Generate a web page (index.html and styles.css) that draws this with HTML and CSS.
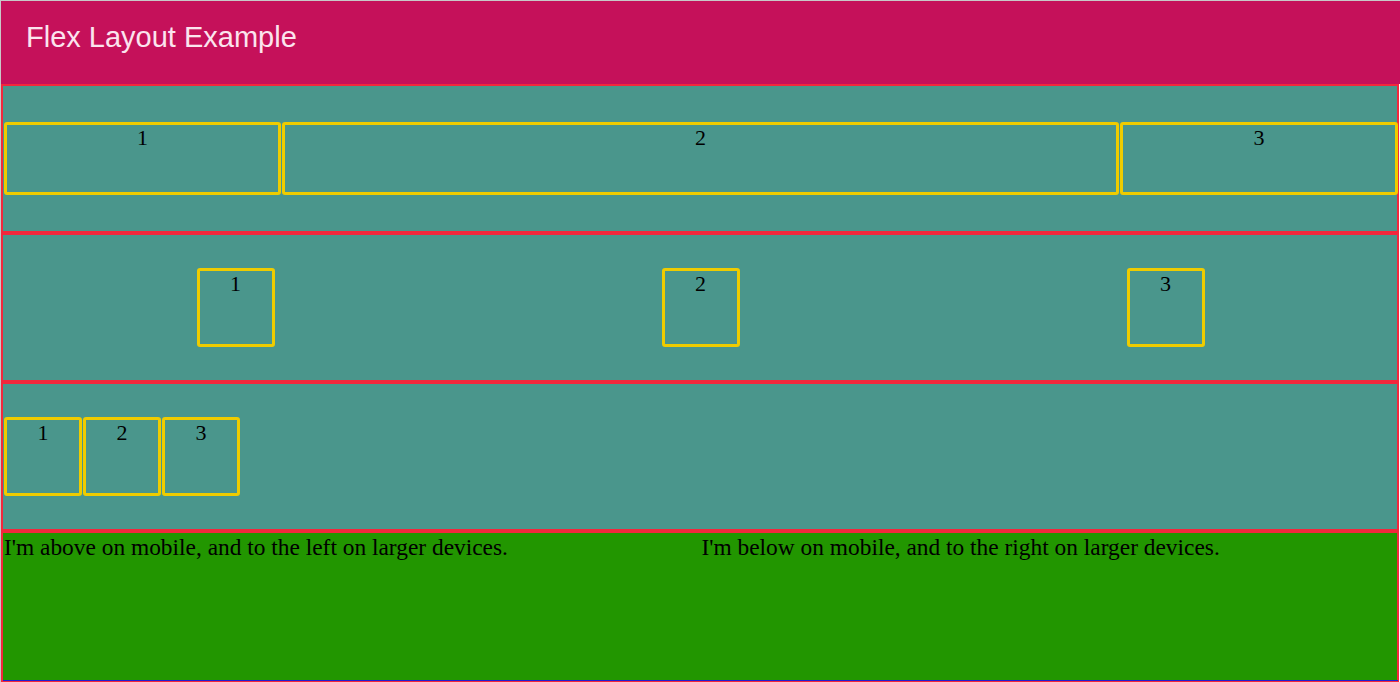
FILE: index.html
```html
<!DOCTYPE html>
<html lang="en">
<head>
<meta charset="utf-8">
<title>Flex Layout Example</title>
<link rel="stylesheet" href="styles.css">
</head>
<body>
<div class="page">
  <header class="toolbar">Flex Layout Example</header>
  <section class="band">
    <div class="row-grow">
      <div class="box side-left">1</div>
      <div class="box middle">2</div>
      <div class="box side-right">3</div>
    </div>
  </section>
  <section class="band">
    <div class="row-around">
      <div class="box square">1</div>
      <div class="box square">2</div>
      <div class="box square">3</div>
    </div>
  </section>
  <section class="band">
    <div class="row-start">
      <div class="box square">1</div>
      <div class="box square">2</div>
      <div class="box square">3</div>
    </div>
  </section>
  <section class="band green">
    <div class="half">I'm above on mobile, and to the left on larger devices.</div>
    <div class="half">I'm below on mobile, and to the right on larger devices.</div>
  </section>
</div>
</body>
</html>
```

FILE: styles.css
```css
html, body {
  margin: 0;
  padding: 0;
  background: #ffffff;
}

body {
  font-family: "Liberation Serif", "Times New Roman", serif;
  font-size: 22px;
  color: #000;
}

.page {
  width: 1400px;
  height: 682px;
  box-sizing: border-box;
  border-top: 1px solid #c8c8c8;
  border-left: 1px solid #c8c8c8;
  overflow: hidden;
}

.toolbar {
  height: 83px;
  box-sizing: border-box;
  background: #c5115a;
  color: #fbe4ee;
  font-family: "Liberation Sans", Arial, sans-serif;
  font-size: 29px;
  display: flex;
  align-items: center;
  padding-left: 25px;
  padding-bottom: 10px;
}

.band {
  height: 149px;
  box-sizing: border-box;
  border: 1px solid #f2283c;
  border-left-width: 2px;
  margin-right: 1px;
  background: #4a968c;
  padding: 0 0 0 0;
  display: flex;
  align-items: center;
  box-shadow: inset 0 1px 0 #f2283c, inset 0 -1px 0 #f2283c, inset -1px 0 0 #f2283c;
}

.band.green {
  background: #229600;
  align-items: flex-start;
  box-shadow: inset 0 1px 0 #f2283c, inset 0 -1px 0 #1f1fd0, inset -1px 0 0 #f2283c;
  height: 151px;
}

.box {
  box-sizing: border-box;
  border: 3px solid #efcc00;
  border-radius: 3px;
  text-align: center;
  line-height: 24px;
  padding-top: 1px;
}

.row-grow {
  display: flex;
  width: 100%;
  gap: 1px;
  padding-left: 1px;
}

.side-left {
  flex: 0 0 277px;
  height: 73px;
}

.middle {
  flex: 1 1 0;
  height: 73px;
}

.side-right {
  flex: 0 0 278px;
  height: 73px;
}

.square {
  width: 78px;
  height: 79px;
  flex: none;
}

.row-around {
  display: flex;
  width: 100%;
  justify-content: space-around;
}

.row-start {
  display: flex;
  width: 100%;
  gap: 1px;
  padding-left: 1px;
}

.half {
  flex: 1 1 0;
  font-size: 23.4px;
  line-height: 30px;
  padding-left: 1px;
}
```
